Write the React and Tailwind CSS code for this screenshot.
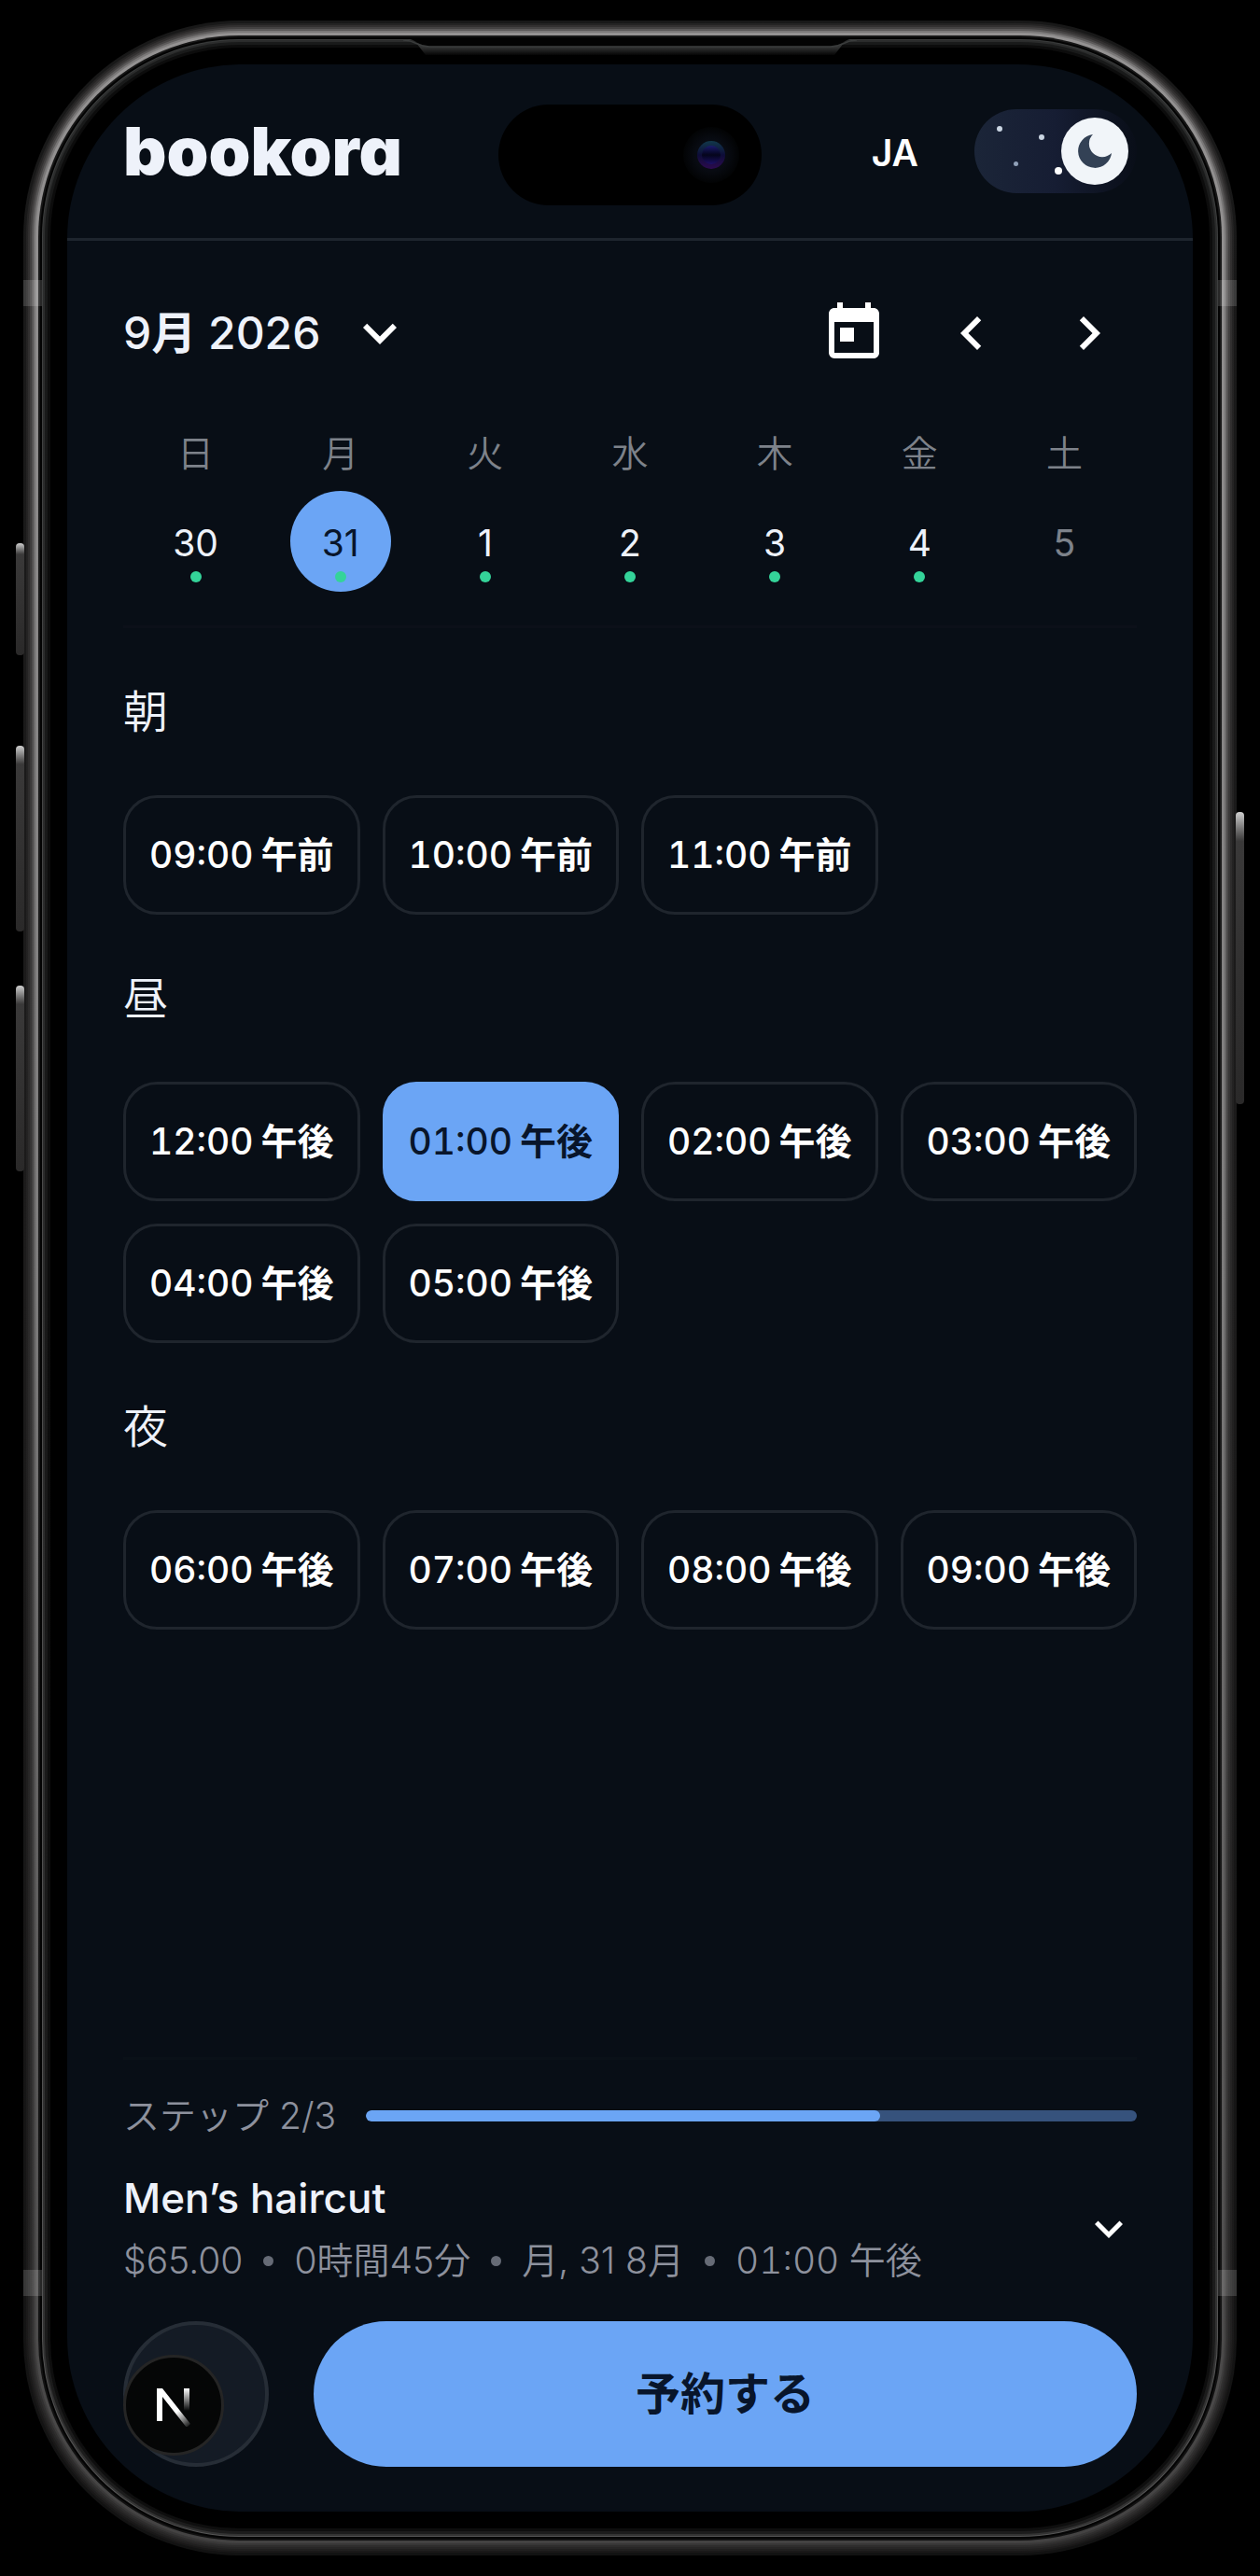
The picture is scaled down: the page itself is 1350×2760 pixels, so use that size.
import React, { useState } from 'react';
import {
  MdChevronLeft,
  MdChevronRight,
  MdKeyboardArrowDown,
  MdToday,
} from 'react-icons/md';

const days = [
  { label: '日', date: 30, open: true },
  { label: '月', date: 31, open: true },
  { label: '火', date: 1, open: true },
  { label: '水', date: 2, open: true },
  { label: '木', date: 3, open: true },
  { label: '金', date: 4, open: true },
  { label: '土', date: 5, open: false },
];

const sections = [
  { title: '朝', period: '午前', slots: ['09:00', '10:00', '11:00'] },
  { title: '昼', period: '午後', slots: ['12:00', '01:00', '02:00', '03:00', '04:00', '05:00'] },
  { title: '夜', period: '午後', slots: ['06:00', '07:00', '08:00', '09:00'] },
];

// Metal edge of the phone, from the outside in
const rings = [
  'rounded-[232px] p-[3px] from-[#181818] via-[#1c1b1b] to-[#121212]',
  'rounded-[229px] p-[2px] from-[#252424] via-[#232222] to-[#191818]',
  'rounded-[227px] p-[2px] from-[#333131] via-[#2b2a2a] to-[#201f1f]',
  'rounded-[225px] p-[2px] from-[#444242] via-[#343333] to-[#272626]',
  'rounded-[223px] p-[2px] from-[#5c5a5a] via-[#444343] to-[#2e2d2d]',
  'rounded-[221px] p-[2px] from-[#7b7979] via-[#626161] to-[#383737]',
  'rounded-[219px] p-[3px] from-[#949292] via-[#7c7b7b] to-[#434242]',
  'rounded-[216px] p-[2px] from-[#161616] via-[#1c1c1c] to-[#101010]',
  'rounded-[214px] p-[2px] from-[#030303] via-[#030303] to-[#030303]',
  'rounded-[212px] p-[1px] from-[#3a3c3c] via-[#4b4b4b] to-[#555555]',
  'rounded-[211px] p-[2px] from-[#2b2c2c] via-[#2b2b2b] to-[#333333]',
  'rounded-[209px] p-[3px] from-[#191a1a] via-[#191919] to-[#1c1c1c]',
  'rounded-[206px] p-[3px] from-[#0c0c0c] via-[#0c0c0c] to-[#0e0e0e]',
  'rounded-[203px] p-[18px] from-black via-black to-black',
];

function Frame({ children }) {
  return rings.reduceRight(
    (inner, ring) => <div className={`flex flex-1 flex-col bg-linear-to-b ${ring}`}>{inner}</div>,
    children
  );
}

function SideButton({ className }) {
  return (
    <span
      className={`absolute w-[9px] rounded-sm bg-linear-to-b from-[#d0d0d0] via-[#3a3939] via-10% to-[#2a2929] ${className}`}
    />
  );
}

// Plastic breaks in the metal band
function Antenna({ className }) {
  return <span className={`absolute h-7 w-5 bg-white/15 ${className}`} />;
}

function Speaker() {
  return (
    <svg
      viewBox="0 0 486 20"
      className="absolute top-[39px] left-1/2 h-5 w-[486px] -translate-x-1/2"
      fill="none"
    >
      <defs>
        <linearGradient id="lip" x1="0" y1="11" x2="0" y2="20" gradientUnits="userSpaceOnUse">
          <stop stopColor="#343535" />
          <stop offset="1" stopColor="#050505" />
        </linearGradient>
      </defs>
      <path d="M14 7C18 10 20 11 28 11H458C466 11 468 10 472 7L462 20H24Z" fill="url(#lip)" />
      <path d="M0 2C14 2 14 10 28 10H458C472 10 472 2 486 2Z" fill="#030303" />
      <path d="M0 4C14 4 14 11 28 11H458C472 11 472 4 486 4" stroke="#3a3c3c" strokeWidth="1.5" />
    </svg>
  );
}

function ThemeToggle() {
  return (
    <button
      type="button"
      role="switch"
      aria-checked="true"
      aria-label="Dark mode"
      className="relative flex h-[90px] w-[174px] items-center justify-end rounded-full bg-linear-to-r from-[#1b2538] via-[#161d33] to-[#090e18] p-[9px]"
    >
      <span className="absolute top-[18px] left-6 size-[6px] rounded-full bg-slate-300" />
      <span className="absolute top-[27px] left-[69px] size-[6px] rounded-full bg-slate-300" />
      <span className="absolute top-[56px] left-[42px] size-[5px] rounded-full bg-slate-400" />
      <span className="absolute top-[62px] left-[86px] size-2 rounded-full bg-white" />
      <span className="relative flex size-[72px] items-center justify-center rounded-full bg-slate-100">
        <svg viewBox="0 0 36 36" className="size-9" fill="#334155">
          <path d="M16 0A18 18 0 1 0 36 20A12 12 0 0 1 16 0Z" />
        </svg>
      </span>
    </button>
  );
}

function Island() {
  return (
    <div className="absolute top-[43px] left-1/2 flex h-[108px] w-[282px] -translate-x-1/2 items-center justify-end rounded-full bg-black pr-6">
      <span className="flex size-[60px] items-center justify-center rounded-full bg-[radial-gradient(circle,#080b12_40%,#020304_70%)]">
        <span className="flex size-[30px] items-center justify-center rounded-full bg-linear-to-b from-[#12384a] via-[#0d0c38] to-[#2c0a4e]">
          <span className="size-5 rounded-full bg-linear-to-b from-[#1c1c6e] via-[#05051c] to-[#1d0f66]" />
        </span>
      </span>
    </div>
  );
}

function DevBadge() {
  return (
    <button
      type="button"
      aria-label="Open dev tools"
      className="absolute bottom-3 left-0 flex size-[108px] items-center justify-center rounded-full border-[3px] border-[#252525] bg-[#050606]"
    >
      <svg viewBox="0 -3 40 46" className="h-[46px] w-10" fill="none">
        <defs>
          <linearGradient id="diag" x1="22" y1="28" x2="36" y2="45" gradientUnits="userSpaceOnUse">
            <stop stopColor="#fff" />
            <stop offset="1" stopColor="#fff" stopOpacity="0" />
          </linearGradient>
          <linearGradient id="stem" x1="0" y1="2" x2="0" y2="26" gradientUnits="userSpaceOnUse">
            <stop stopColor="#fff" />
            <stop offset="1" stopColor="#fff" stopOpacity="0" />
          </linearGradient>
        </defs>
        <path d="M2 2h6l30 38-4 4L8 11v26H2z" fill="url(#diag)" />
        <path d="M31 2h6v28h-6z" fill="url(#stem)" />
      </svg>
    </button>
  );
}

export default function App() {
  const [date, setDate] = useState(31);
  const [slot, setSlot] = useState('01:00');

  return (
    <div className="relative flex min-h-screen flex-col bg-black px-[25px] py-[22px] font-['Inter','Noto_Sans_CJK_JP',sans-serif] text-[39px] leading-[60px] text-white">
      <SideButton className="top-[582px] left-[17px] h-[120px]" />
      <SideButton className="top-[799px] left-[17px] h-[199px]" />
      <SideButton className="top-[1056px] left-[17px] h-[199px]" />
      <SideButton className="top-[870px] right-[17px] h-[313px]" />

      <Frame>
        <div className="relative flex flex-1 flex-col overflow-hidden rounded-[187px] bg-[#080e16]">
          <header className="flex h-[189px] items-center justify-between border-b-[3px] border-[#1e252e] px-[60px]">
            <a href="#" className="text-7xl font-black text-[#eef2fa] [font-feature-settings:'cv11']">
              bookora
            </a>
            <div className="flex items-center gap-[60px]">
              <button type="button" className="pt-1 font-semibold">
                JA
              </button>
              <ThemeToggle />
            </div>
            <Island />
          </header>

          <main className="px-[60px]">
            <section className="border-b-[3px] border-[#0c1019] pt-12 pb-9">
              <div className="flex h-[102px] items-center justify-between">
                <button type="button" className="flex items-center gap-7 text-5xl font-medium text-[#eef2fa]">
                  <span>
                    9<span className="font-semibold">月</span> 2026
                  </span>
                  <MdKeyboardArrowDown className="size-[72px] text-white" />
                </button>
                <div className="flex gap-6">
                  <button type="button" aria-label="Today" className="flex size-[102px] items-center justify-center">
                    <MdToday className="size-[72px]" />
                  </button>
                  <button type="button" aria-label="Previous week" className="flex size-[102px] items-center justify-center">
                    <MdChevronLeft className="size-[72px]" />
                  </button>
                  <button type="button" aria-label="Next week" className="flex size-[102px] items-center justify-center">
                    <MdChevronRight className="size-[72px]" />
                  </button>
                </div>
              </div>

              <div className="mt-12 grid grid-cols-7">
                {days.map((day) => (
                  <div key={day.date} className="flex flex-col items-center gap-[10px]">
                    <span className="font-[350] text-[#7d828a]">{day.label}</span>
                    <button
                      type="button"
                      disabled={!day.open}
                      onClick={() => setDate(day.date)}
                      className={`relative flex size-[108px] items-center justify-center rounded-full pt-1 ${
                        day.date === date ? 'bg-[#6ba5f5] text-[#08152b]' : day.open ? 'text-[#eef2fa]' : 'text-[#7d828a]'
                      }`}
                    >
                      {day.date}
                      {day.open && (
                        <span className="absolute bottom-[10px] left-1/2 size-3 -translate-x-1/2 rounded-full bg-[#34d399]" />
                      )}
                    </button>
                  </div>
                ))}
              </div>
            </section>

            {sections.map((section) => (
              <section key={section.title} className="pt-[55px]">
                <h2 className="text-5xl leading-[70px] font-[350] text-[#eef2fa]">{section.title}</h2>
                <div className="mt-[54px] grid grid-cols-4 gap-6">
                  {section.slots.map((time) => (
                    <button
                      key={time}
                      type="button"
                      onClick={() => setSlot(time)}
                      className={`flex h-32 items-center justify-center gap-2 rounded-[36px] border-[3px] font-medium whitespace-nowrap tabular-nums ${
                        time === slot ? 'border-[#6ba5f5] bg-[#6ba5f5] text-[#08152b]' : 'border-[#1f252d]'
                      }`}
                    >
                      <span>{time}</span>
                      <span className="font-semibold">{section.period}</span>
                    </button>
                  ))}
                </div>
              </section>
            ))}
          </main>

          <footer className="mt-auto px-[60px] pb-12">
            <div className="flex items-center gap-8 border-t-[3px] border-[#0a1118] pt-[30px] text-[#8d919d]">
              <span className="font-[350]">ステップ 2/3</span>
              <div className="h-3 flex-1 overflow-hidden rounded-full bg-[#36527c]">
                <div className="h-full w-2/3 rounded-full bg-[#6ba5f5]" />
              </div>
            </div>

            <div className="mt-6 flex items-center justify-between">
              <div>
                <h3 className="text-[44px] leading-[68px] font-medium text-[#eef2fa]">Men’s haircut</h3>
                <p className="flex items-center gap-[22px] leading-[66px] font-[350] text-[#8d919d]">
                  <span>$65.00</span>
                  <span className="size-[11px] rounded-full bg-[#666b76]" />
                  <span>0時間45分</span>
                  <span className="size-[11px] rounded-full bg-[#666b76]" />
                  <span>月, 31 8月</span>
                  <span className="size-[11px] rounded-full bg-[#666b76]" />
                  <span className="tabular-nums">01:00 午後</span>
                </p>
              </div>
              <button type="button" aria-label="Show details">
                <MdKeyboardArrowDown className="size-[60px]" />
              </button>
            </div>

            <div className="relative mt-8 flex gap-12">
              <button
                type="button"
                aria-label="Back"
                className="size-[156px] rounded-full border-[4px] border-[#262d36] bg-[#141b25]"
              />
              <button
                type="button"
                className="h-[156px] flex-1 rounded-full bg-[#6ba5f5] text-5xl font-semibold text-[#08152b]"
              >
                予約する
              </button>
              <DevBadge />
            </div>
          </footer>
        </div>
      </Frame>

      <Speaker />
      <Antenna className="top-[300px] left-[25px]" />
      <Antenna className="top-[300px] right-[25px]" />
      <Antenna className="bottom-[300px] left-[25px]" />
      <Antenna className="right-[25px] bottom-[300px]" />
    </div>
  );
}
